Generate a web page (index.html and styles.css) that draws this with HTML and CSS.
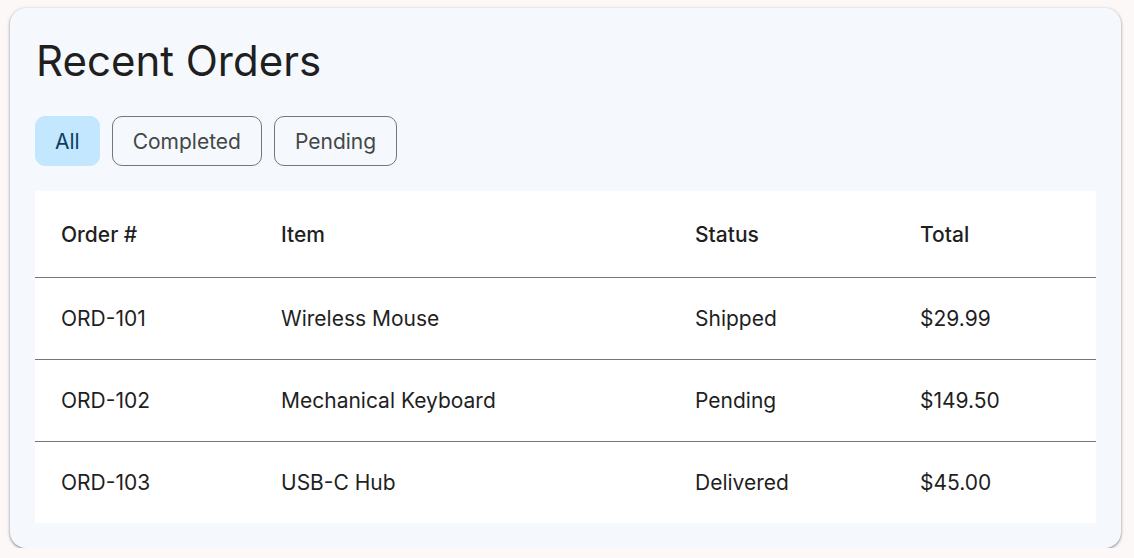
FILE: index.html
```html
<!DOCTYPE html>
<html lang="en">
<head>
    <meta charset="UTF-8">
    <link rel="stylesheet" href="styles.css">
    <title>Recent Orders</title>
</head>
<body>
    <div class="orders-card">
        <h2 class="orders-title">Recent Orders</h2>
        <div class="filter-chips">
            <button class="chip chip-active">All</button>
            <button class="chip">Completed</button>
            <button class="chip">Pending</button>
        </div>
        <table class="orders-table">
            <thead>
                <tr>
                    <th class="col-id">Order #</th>
                    <th class="col-item">Item</th>
                    <th class="col-status">Status</th>
                    <th class="col-total">Total</th>
                </tr>
            </thead>
            <tbody>
                <tr>
                    <td>ORD-101</td>
                    <td>Wireless Mouse</td>
                    <td>Shipped</td>
                    <td>$29.99</td>
                </tr>
                <tr>
                    <td>ORD-102</td>
                    <td>Mechanical Keyboard</td>
                    <td>Pending</td>
                    <td>$149.50</td>
                </tr>
                <tr>
                    <td>ORD-103</td>
                    <td>USB-C Hub</td>
                    <td>Delivered</td>
                    <td>$45.00</td>
                </tr>
            </tbody>
        </table>
    </div>
</body>
</html>
```

FILE: styles.css
```css
body {
    margin: 0;
    background-color: #fdf8f8;
    font-family: Inter, "Open Sans", sans-serif;
    color: #1f1f1f;
}

.orders-card {
    margin: 8px 13px 0 10px;
    padding: 22px 25px 25px 25px;
    background-color: #f5f9fd;
    border-radius: 16px;
    box-shadow: 0 1px 2px rgba(0,0,0,0.3), 0 1px 3px 1px rgba(0,0,0,0.15);
}

.orders-title {
    margin: 0 0 0 1px;
    font-size: 42px;
    font-weight: 400;
    line-height: 62px;
}

.filter-chips {
    display: flex;
    gap: 12px;
    margin-top: 24px;
}

.chip {
    height: 50px;
    padding: 0 20px;
    font-family: inherit;
    font-size: 21px;
    color: #444746;
    background: transparent;
    border: 1px solid #747775;
    border-radius: 10px;
}

.chip-active {
    padding: 0 19px;
    border-color: #c2e7ff;
    background-color: #c2e7ff;
    color: #0b3d62;
}

/* table */
.orders-table {
    width: 100%;
    margin-top: 25px;
    border-collapse: collapse;
    background-color: #fff;
    font-size: 21px;
}

.orders-table th,
.orders-table td {
    padding: 0 26px;
    text-align: left;
    font-weight: 400;
}

.orders-table th {
    height: 86px;
    font-weight: 500;
}

.orders-table td {
    height: 81px;
    color: #1f1f1f;
}

.orders-table tr {
    border-bottom: 1px solid #747775;
}

.orders-table tbody tr:last-child {
    border-bottom: none;
}

.col-id { width: 168px; }
.col-item { width: 362px; }
.col-status { width: 173px; }
```
